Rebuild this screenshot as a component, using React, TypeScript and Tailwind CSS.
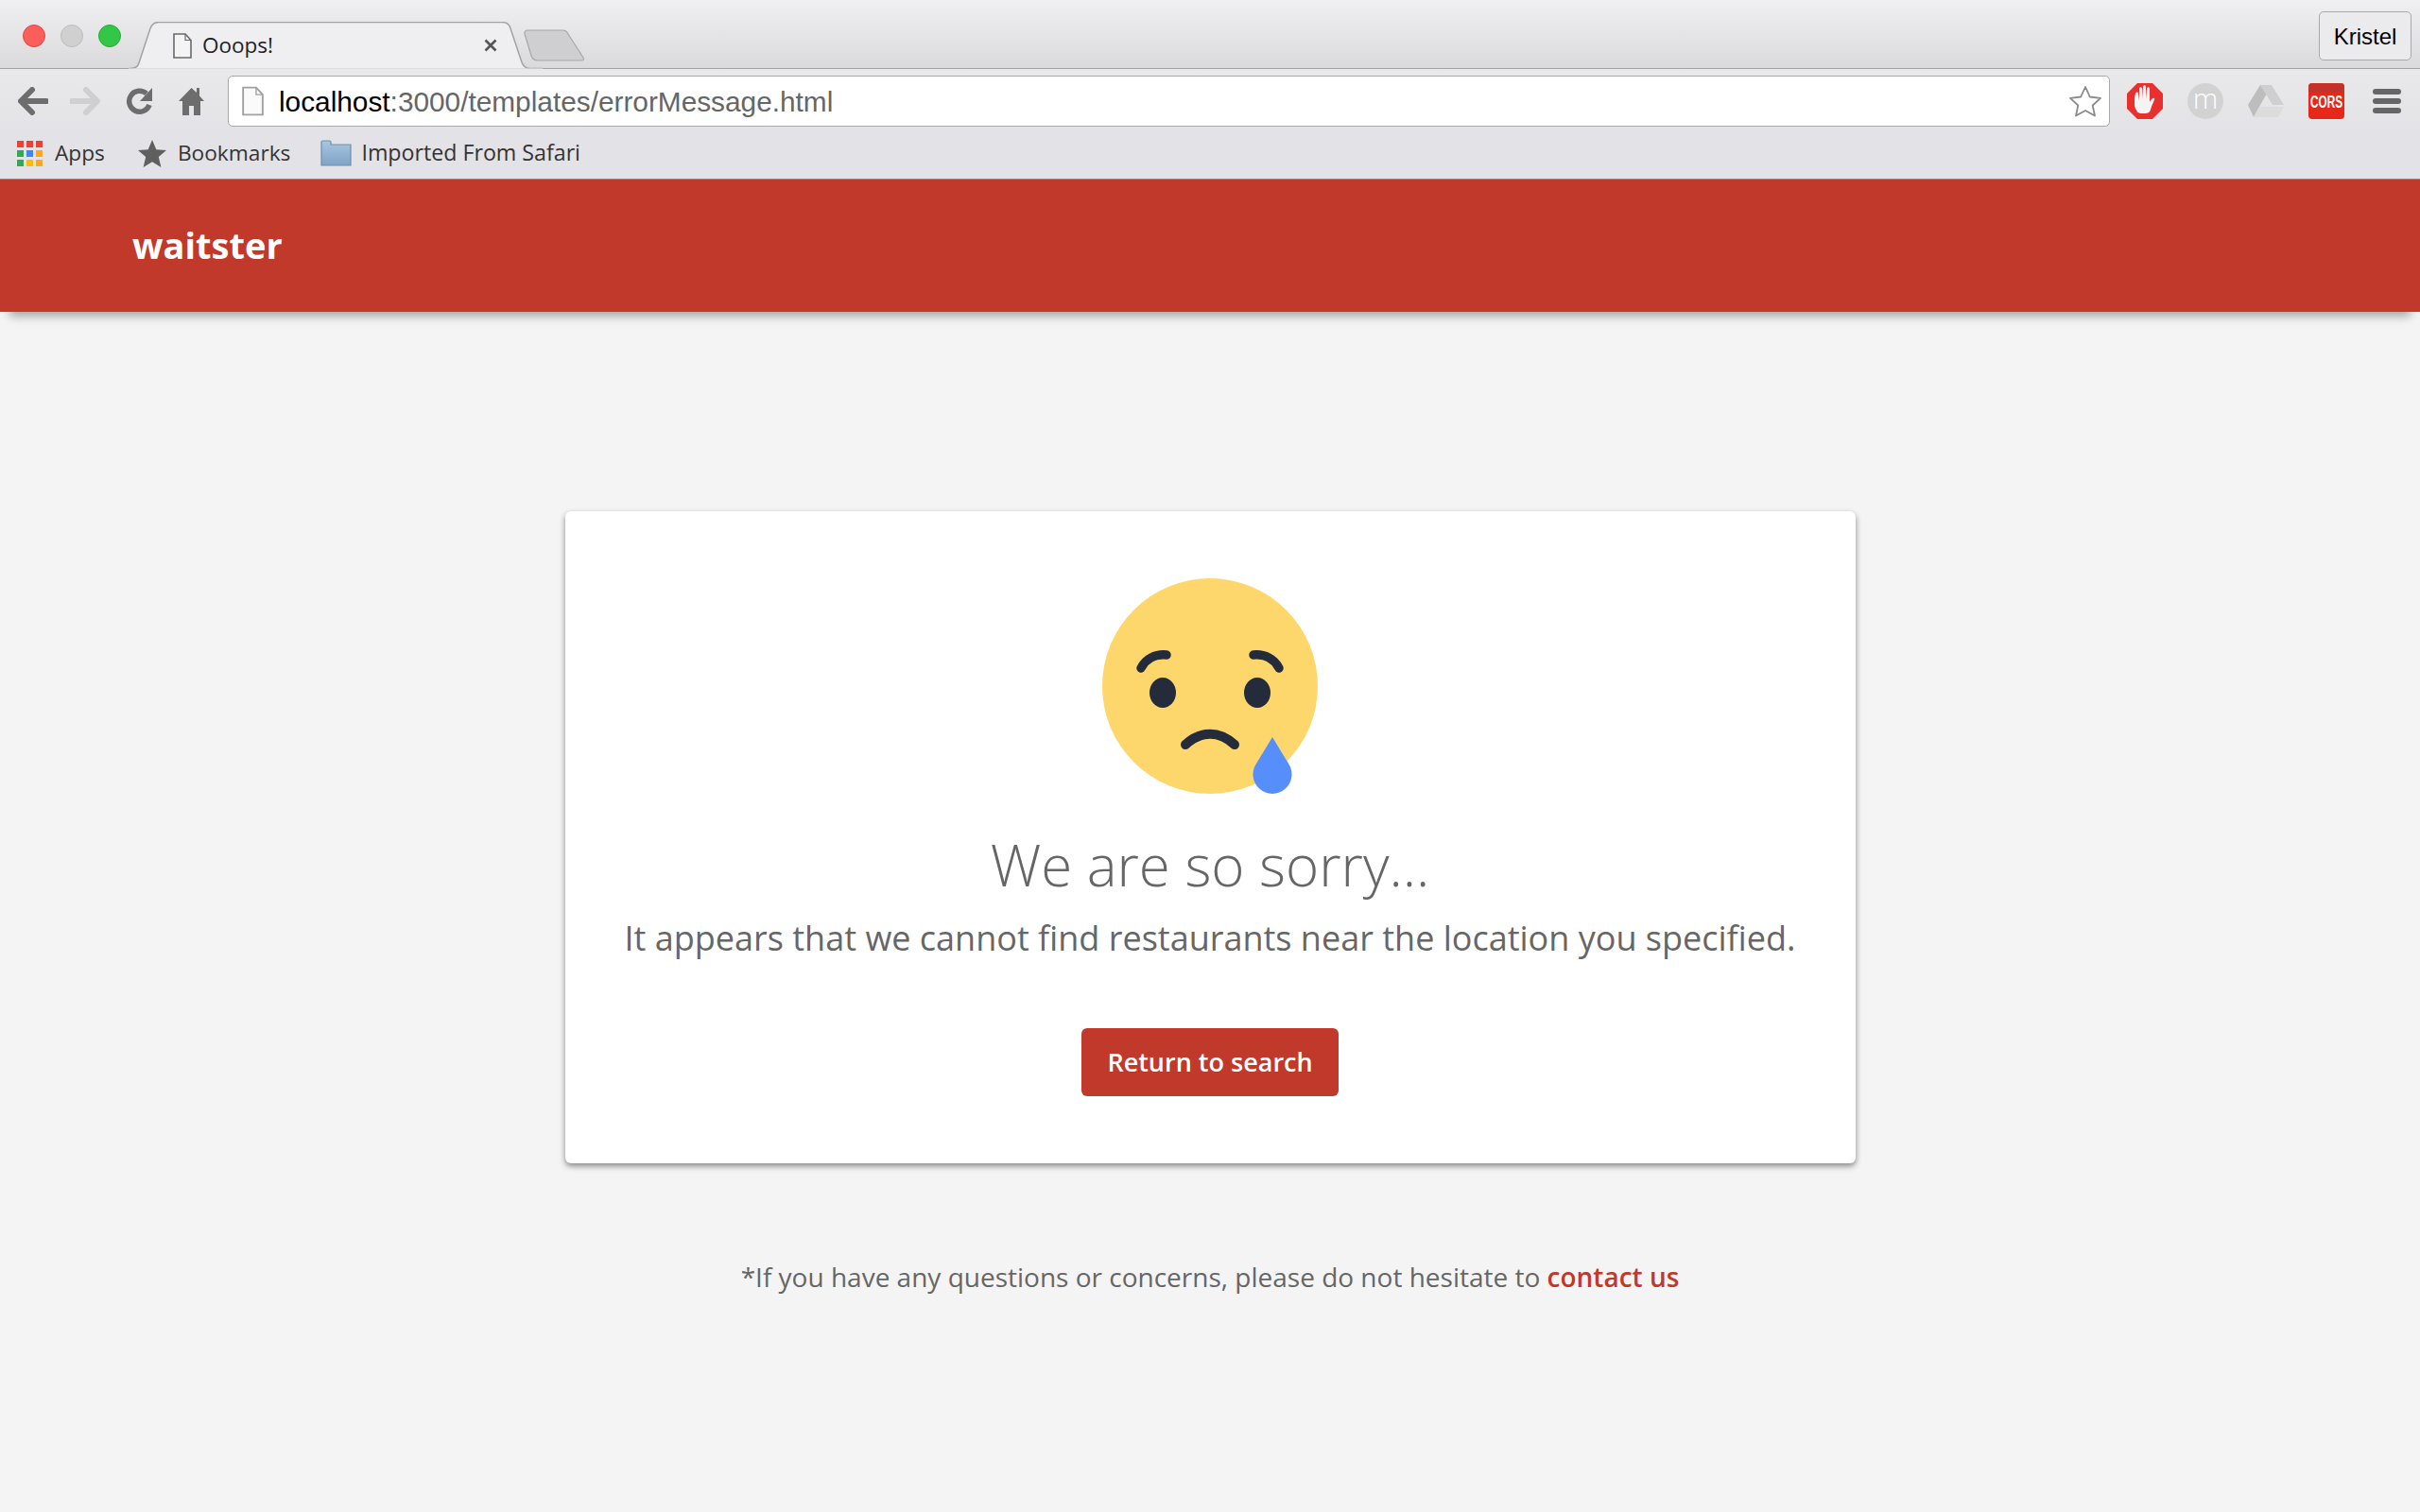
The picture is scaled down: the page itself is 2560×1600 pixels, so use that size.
import React from "react";

const Doc = ({ w, h, fill, stroke }: { w: number; h: number; fill: string; stroke: string }) => (
  <svg width={w} height={h} viewBox="0 0 20 27" className="shrink-0">
    <path d="M1 1h12l6 6.5V26H1z" fill={fill} stroke={stroke} strokeWidth="1.6" />
    <path d="M13 1v6.5h6" fill="none" stroke={stroke} strokeWidth="1.2" />
  </svg>
);

const TabShape = () => (
  <svg width="438" height="50" viewBox="0 0 438 50" className="absolute left-0 top-0">
    <path d="M0 49.5h2c5 0 8-2 9-6L23 7c1.500-4 4-6.500 9-6.500h363c5 0 8 2.500 9 6.500l12 36c1.500 4 4 6.500 9 6.500h13" fill="#efeef0" stroke="#a3a3a5" strokeWidth="1.500" />
    <path d="M0 50h438" stroke="#efeef0" strokeWidth="1" />
  </svg>
);

const Emoji = () => (
  <svg width="232" height="232" viewBox="0 0 232 232" className="block">
    <circle cx="114" cy="114" r="114" fill="#fed76c" />
    <ellipse cx="64" cy="121" rx="14" ry="16" fill="#242b3b" />
    <ellipse cx="164" cy="121" rx="14" ry="16" fill="#242b3b" />
    <path d="M41 95c5-10 15-15 27-14" fill="none" stroke="#242b3b" strokeWidth="9.500" strokeLinecap="round" />
    <path d="M187 95c-5-10-15-15-27-14" fill="none" stroke="#242b3b" strokeWidth="9.500" strokeLinecap="round" />
    <path d="M88 176c16-15 36-15 52 0" fill="none" stroke="#242b3b" strokeWidth="10" strokeLinecap="round" />
    <path d="M180 168l17 28a20.500 20.500 0 1 1-34 0z" fill="#568ffc" />
  </svg>
);

const ToolIcon = ({ children, w }: { children: React.ReactNode; w: string }) => (
  <div className={`flex items-center justify-center h-10 ${w}`}>{children}</div>
);

export default function App() {
  return (
    <div className="w-[2560px] h-[1600px] bg-[#f4f4f4] overflow-hidden flex flex-col font-['Open_Sans',sans-serif]">
      {/* tab strip */}
      <div className="h-[73px] shrink-0 border-b border-[#a3a3a5] bg-gradient-to-b from-[#f0eff2] to-[#dadadc] flex items-start">
        <div className="flex items-center gap-[16px] pl-[24px] pt-[26px]">
          <span className="w-6 h-6 rounded-full bg-[#fc5f5a] border border-[#e0443e]" />
          <span className="w-6 h-6 rounded-full bg-[#d0d0d0] border border-[#bcbcbc]" />
          <span className="w-6 h-6 rounded-full bg-[#33c748] border border-[#27aa35]" />
        </div>
        <div className="relative ml-[8px] mt-[23px] w-[438px] h-[50px] shrink-0">
          <TabShape />
          <div className="relative flex items-center h-[50px] pl-[37px] pr-[48px]">
            <span className="ml-[10px] flex items-center">
              <Doc w={20} h={27} fill="#f4f4f5" stroke="#6a6a6a" />
            </span>
            <span className="ml-[11px] text-[22.500px] leading-none text-[#222]">Ooops!</span>
            <svg width="14" height="14" viewBox="0 0 14 14" className="ml-auto">
              <path d="M1.500 1.500l11 11M12.500 1.500l-11 11" stroke="#555" strokeWidth="2.600" />
            </svg>
          </div>
        </div>
        <svg width="66" height="34" viewBox="0 0 66 34" className="-ml-[21px] mt-[31px] shrink-0 relative">
          <path d="M2 5c-.500-2.500 1-4 3-4h37c3 0 5 1.500 6 4l16 25c1 2 .500 3-2 3H16c-4 0-6-2-7-5z" fill="#cfced0" stroke="#a8a8aa" strokeWidth="1.200" />
        </svg>
        <button className="ml-auto mr-[9px] mt-[12px] w-[98px] h-[52px] rounded-[5px] border border-[#a9a9ab] bg-[#ebebed] pt-[2px] text-[24px] leading-none text-black font-['Liberation_Sans',sans-serif]">
          Kristel
        </button>
      </div>

      {/* toolbar */}
      <div className="h-[68px] shrink-0 bg-gradient-to-b from-[#e9e9eb] to-[#e3e2e6] flex items-center">
        <div className="flex items-center pl-[15px] gap-[15px] w-[241px]">
          <ToolIcon w="w-[40px]">
            <svg width="32" height="30" viewBox="0 0 32 30"><path d="M15 3L3 15l12 12M4 15h26" fill="none" stroke="#6d6d6d" strokeWidth="6" strokeLinejoin="round" strokeLinecap="round" /></svg>
          </ToolIcon>
          <ToolIcon w="w-[40px]">
            <svg width="32" height="30" viewBox="0 0 32 30"><path d="M17 3l12 12-12 12M28 15H2" fill="none" stroke="#cfcfd1" strokeWidth="6" strokeLinejoin="round" strokeLinecap="round" /></svg>
          </ToolIcon>
          <div className="ml-[3px]">
            <ToolIcon w="w-[40px]">
              <svg width="30" height="32" viewBox="0 0 30 32"><path d="M25 20a11 11 0 1 1-3-12" fill="none" stroke="#6d6d6d" strokeWidth="5.500" /><path d="M28 2v14H15z" fill="#6d6d6d" /></svg>
            </ToolIcon>
          </div>
          <div className="ml-[6px]">
            <ToolIcon w="w-[27px]">
              <svg width="27" height="30" viewBox="0 0 27 30"><path d="M13.500 1L0 15h4v15h7v-10h5v10h7V15h4l-5-5.500V1h-3v5z" fill="#6d6d6d" /></svg>
            </ToolIcon>
          </div>
        </div>
        <div className="w-[1991px] h-[54px] shrink-0 rounded-[5px] border border-[#a8a8aa] bg-white flex items-center pl-[14px] pr-[7px]">
          <Doc w={23} h={32} fill="#fafafa" stroke="#a0a0a0" />
          <span className="ml-[16px] pt-[2px] text-[29.800px] leading-none font-['Liberation_Sans',sans-serif] text-[#666]">
            <span className="text-black">localhost</span>:3000/templates/errorMessage.html
          </span>
          <svg width="36" height="34" viewBox="0 0 36 34" className="ml-auto">
            <path d="M18 2l4.800 10.500 11.200 1.300-8.300 7.700 2.300 11L18 27l-10 5.500 2.300-11L2 13.800l11.200-1.300z" fill="#fff" stroke="#8a8a8a" strokeWidth="1.800" strokeLinejoin="round" />
          </svg>
        </div>
        <div className="flex items-center pl-[17px] gap-[24px]">
          <ToolIcon w="w-[40px]">
            <svg width="38" height="38" viewBox="0 0 38 38">
              <path d="M11 0h16l11 11v16L27 38H11L0 27V11z" fill="#e8302e" />
              <path d="M11 30c-3-4-3-6-3-10 0-3 0-6 1-9 .500-2 3-2 3 0l1 7V6c0-2.500 3-2.500 3 0v11l1-13c0-2.500 3-2.500 3 0v13l1-11c.500-2.500 3-2 3 0v14c1-2 3-5 5-4 1 1-2 5-4 12-1 3-3 4-6 4h-4c-2 0-3-1-5-2z" fill="#f4f4f4" />
            </svg>
          </ToolIcon>
          <ToolIcon w="w-[40px]">
            <div className="w-[38px] h-[38px] rounded-full bg-[#d2d2d2] flex items-center justify-center text-white text-[30px] leading-none pb-[6px] font-light">m</div>
          </ToolIcon>
          <ToolIcon w="w-[40px]">
            <svg width="38" height="34" viewBox="0 0 38 34">
              <path d="M13 0h12L12 23 6 34 0 21z" fill="#bdbdbd" />
              <path d="M13 0h12l13 21H26z" fill="#cfcfcf" />
              <path d="M12 23h26l-6 11H6z" fill="#dcdcdc" />
            </svg>
          </ToolIcon>
          <ToolIcon w="w-[40px]">
            <svg width="38" height="38" viewBox="0 0 38 38">
              <rect width="38" height="38" rx="4" fill="#e5281a" />
              <path d="M4 0h30a4 4 0 0 1 4 4v6H0V4a4 4 0 0 1 4-4z" fill="#c4302a" />
              <g transform="translate(19 26) scale(0.62 1)">
                <text x="0" y="0" textAnchor="middle" fontSize="19" fontWeight="700" fill="#fff" fontFamily="'Liberation Sans',sans-serif">CORS</text>
              </g>
            </svg>
          </ToolIcon>
          <ToolIcon w="w-[40px]">
            <div className="flex flex-col gap-[4px]">
              <span className="block w-[30px] h-[6px] rounded-[3px] bg-[#666]" />
              <span className="block w-[30px] h-[6px] rounded-[3px] bg-[#666]" />
              <span className="block w-[30px] h-[6px] rounded-[3px] bg-[#666]" />
            </div>
          </ToolIcon>
        </div>
      </div>

      {/* bookmarks */}
      <div className="h-[49px] shrink-0 bg-[#e3e2e6] border-b border-[#8e8e8e] flex items-center pl-[18px] pb-[6px] text-[22.700px] leading-none text-[#333]">
        <div className="grid grid-cols-3 gap-[3px] w-[27px]">
          {["#ea4335", "#ea4335", "#ea4335", "#34a853", "#4285f4", "#f9a825", "#34a853", "#fbbc05", "#f9a825"].map((c, i) => (
            <span key={i} className="block w-[7px] h-[7px]" style={{ backgroundColor: c }} />
          ))}
        </div>
        <span className="ml-[13px]">Apps</span>
        <svg width="30" height="29" viewBox="0 0 30 29" className="ml-[35px]">
          <path d="M15 0l4.300 10.300 10.700.800-8.200 7 2.600 10.900L15 23.200 5.600 29l2.600-10.900-8.200-7 10.700-.800z" fill="#5f5f5f" />
        </svg>
        <span className="ml-[12px]">Bookmarks</span>
        <svg width="33" height="28" viewBox="0 0 33 28" className="ml-[32px]">
          <defs>
            <linearGradient id="folderFill" x1="0" y1="0" x2="0" y2="1">
              <stop offset="0" stopColor="#a9c6e0" />
              <stop offset="1" stopColor="#7fa3c6" />
            </linearGradient>
          </defs>
          <path d="M1 5V2.500C1 1.500 1.500 1 2.500 1h7c1 0 1.500.5 1.500 1.500V5h21v22H1z" fill="url(#folderFill)" stroke="#6e8fae" strokeWidth="1.200" />
        </svg>
        <span className="ml-[10px] text-[23.200px]">Imported From Safari</span>
      </div>

      {/* app bar */}
      <header className="h-[140px] shrink-0 bg-[#c0392b] flex items-center pl-[140px] pb-[2px] shadow-[0_14px_10px_-10px_rgba(0,0,0,0.35)] relative">
        <span className="text-white text-[38px] font-bold leading-none">waitster</span>
      </header>

      {/* content */}
      <main className="flex flex-col items-center pt-[211px]">
        <div className="w-[1365px] h-[690px] bg-white rounded-[6px] shadow-[0_3px_6px_rgba(0,0,0,0.45)] flex flex-col items-center pt-[71px]">
          <div className="w-[228px] h-[232px]"><Emoji /></div>
          <h1 className="mt-[35px] text-[60px] leading-[72px] font-light text-[#666]">We are so sorry...</h1>
          <p className="mt-[16px] text-[36px] leading-[52px] text-[#666]">It appears that we cannot find restaurants near the location you specified.</p>
          <button className="mt-[69px] w-[272px] h-[72px] rounded-[6px] bg-[#c0392b] pb-[1px] text-white text-[27px] font-semibold leading-none">Return to search</button>
        </div>
        <p className="mt-[99px] text-[28px] leading-[42px] text-[#666]">
          *If you have any questions or concerns, please do not hesitate to <a className="font-semibold text-[#c0392b]">contact us</a>
        </p>
      </main>
    </div>
  );
}
